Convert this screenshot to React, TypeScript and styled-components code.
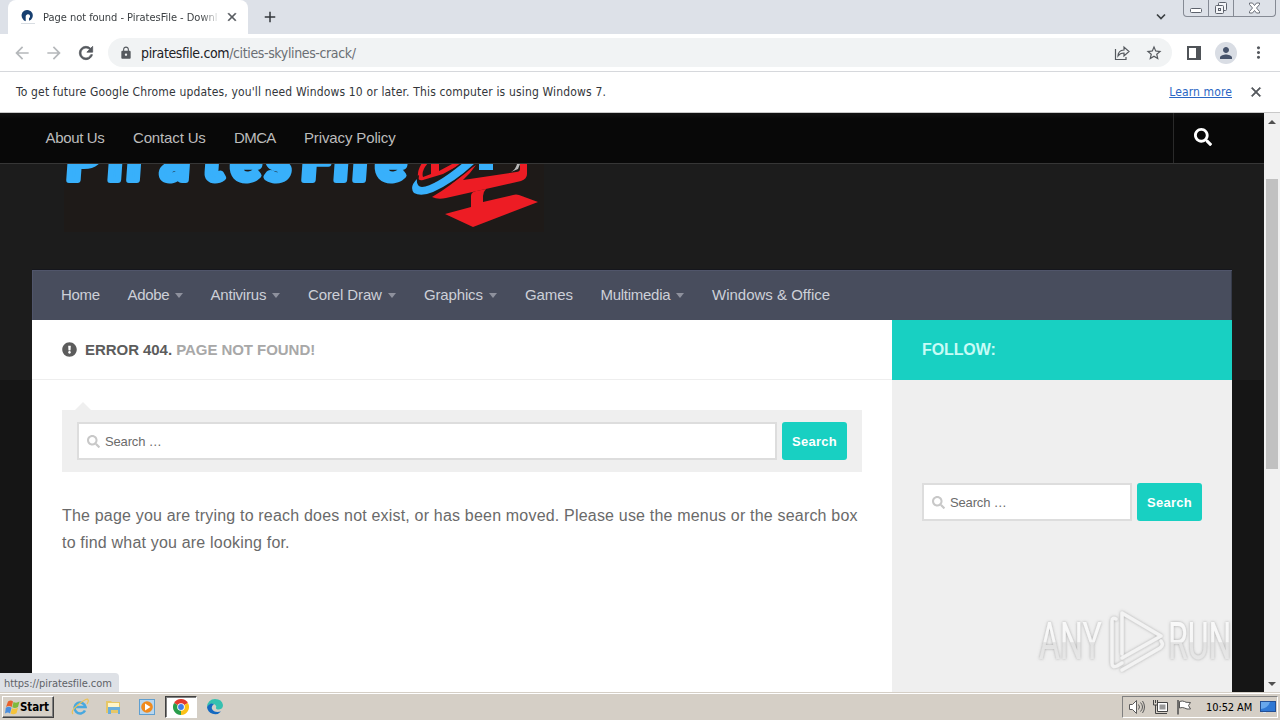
import React from "react";
import styled, { createGlobalStyle } from "styled-components";
import { FaSearch, FaExclamationCircle } from "react-icons/fa";
import { MdLock, MdRefresh, MdArrowBack, MdArrowForward, MdStarBorder, MdPerson, MdMoreVert, MdClose, MdAdd } from "react-icons/md";

const tahoma = `"DejaVu Sans Condensed", "DejaVu Sans", sans-serif`;
const arial = `"Liberation Sans", Arial, sans-serif`;

const GlobalStyle = createGlobalStyle`
  * {
    box-sizing: border-box;
  }
  body {
    margin: 0;
    overflow: hidden;
  }
  svg {
    display: block;
    flex: none;
  }
`;

interface Spaced {
  $spacing?: number;
}

const Screen = styled.div`
  width: 1280px;
  height: 720px;
  display: flex;
  flex-direction: column;
  overflow: hidden;
  position: relative;
  font-family: ${tahoma};
  background: white;
`;

/* ---------- browser chrome ---------- */

const TabStrip = styled.div`
  height: 34px;
  flex: none;
  display: flex;
  align-items: flex-start;
  background: #dde1e8;
  padding-left: 8px;
`;

const Tab = styled.div`
  width: 240px;
  height: 34px;
  display: flex;
  align-items: center;
  padding: 0 9px 0 12px;
  background: white;
  border-radius: 8px 8px 0 0;
`;

const TabTitle = styled.div`
  width: 176px;
  margin-left: 7px;
  overflow: hidden;
  white-space: nowrap;
  font-size: 11px;
  letter-spacing: -0.03px;
  color: #3c4043;
  mask-image: linear-gradient(to right, black 158px, transparent 177px);
`;

const NewTab = styled.div`
  margin: 8px auto 0 13px;
  color: #33373b;
`;

const TabSearch = styled.div`
  margin: 13px 17px 0 0;
`;

const WindowButtons = styled.div`
  display: flex;
  height: 17px;
  margin-right: 4px;
  border: 1px solid #858a94;
  border-top: none;
  border-radius: 0 0 4px 4px;
`;

const WindowButton = styled.div<{ $width: number }>`
  width: ${(p) => p.$width}px;
  display: flex;
  align-items: center;
  justify-content: center;
  & + & {
    border-left: 1px solid #858a94;
  }
`;

const Toolbar = styled.div`
  height: 38px;
  flex: none;
  display: flex;
  align-items: center;
  padding: 0 12px;
  border-bottom: 1px solid #d6d8dc;
  color: #55595e;
`;

const ToolIcon = styled.div<{ $left: number; $dim?: boolean; $bold?: boolean }>`
  margin-left: ${(p) => p.$left}px;
  color: ${(p) => (p.$dim ? "#b5b8bb" : "#55595e")};
  path:not([fill="none"]) {
    stroke: currentColor;
    stroke-width: ${(p) => (p.$bold ? 0.9 : 0)};
  }
`;

const Omnibox = styled.div`
  width: 1064px;
  height: 29px;
  margin-left: 12px;
  display: flex;
  align-items: center;
  padding: 0 9px 0 11px;
  border-radius: 15px;
  background: #f1f3f4;
`;

const Url = styled.div`
  flex: 1;
  margin-left: 8px;
  font-size: 14px;
  letter-spacing: -0.37px;
  color: #6a6e73;
  b {
    font-weight: 400;
    color: #202124;
  }
`;

const Avatar = styled.div`
  width: 22px;
  height: 22px;
  margin-left: 14px;
  display: flex;
  align-items: center;
  justify-content: center;
  border-radius: 50%;
  background: #d9dde4;
  color: #46536b;
`;

const InfoBar = styled.div`
  height: 41px;
  flex: none;
  display: flex;
  align-items: center;
  padding: 0 16px;
  border-bottom: 1px solid #c9c9c9;
  font-size: 12px;
  color: #33363a;
`;

const InfoText = styled.div<Spaced>`
  flex: 1;
  letter-spacing: ${(p) => p.$spacing}px;
`;

const LearnMore = styled.a<Spaced>`
  color: #2a66c4;
  text-decoration: underline;
  letter-spacing: ${(p) => p.$spacing}px;
`;

/* ---------- site ---------- */

const Viewport = styled.div`
  height: 579px;
  flex: none;
  display: flex;
  font-family: ${arial};
`;

const Site = styled.div`
  width: 1264px;
  display: flex;
  flex-direction: column;
  overflow: hidden;
  background: linear-gradient(#1c1c1c 267px, #151515 267px);
`;

const TopBar = styled.div`
  height: 51px;
  flex: none;
  display: flex;
  align-items: center;
  padding-left: 45.5px;
  background: linear-gradient(#121212, #080808 6px);
  border-bottom: 1px solid #363636;
`;

const TopLink = styled.div<{ $width: number } & Spaced>`
  width: ${(p) => p.$width}px;
  padding-bottom: 2px;
  font-size: 15px;
  white-space: nowrap;
  letter-spacing: ${(p) => p.$spacing}px;
  color: #bcbcbc;
`;

const TopSearch = styled.div`
  width: 91px;
  height: 50px;
  margin-left: auto;
  display: flex;
  align-items: center;
  padding: 0 0 2px 20px;
  border-left: 1px solid #2a2a2a;
  color: white;
`;

const Header = styled.div`
  height: 106px;
  flex: none;
  padding-left: 62px;
  overflow: hidden;
`;

const NavBar = styled.div`
  width: 1200px;
  height: 50px;
  flex: none;
  margin-left: 32px;
  display: flex;
  align-items: center;
  padding: 0 0 2px 29px;
  background: #484d5d;
  box-shadow: 0 -1px 0 #15161c, inset 1px 1px 0 #50556a, inset -1px 0 0 #353a49;
`;

const NavItem = styled.div<{ $width: number } & Spaced>`
  width: ${(p) => p.$width}px;
  display: flex;
  align-items: center;
  white-space: nowrap;
  font-size: 15px;
  letter-spacing: ${(p) => p.$spacing}px;
  color: #cdd0d8;
`;

const Caret = styled.span`
  margin: 2px 0 0 6px;
  border: 4.5px solid transparent;
  border-top: 5px solid #8e919d;
  border-bottom: none;
`;

const Columns = styled.div`
  flex: 1;
  width: 1200px;
  margin-left: 32px;
  display: flex;
`;

const Main = styled.div`
  width: 860px;
  background: white;
`;

const PageTitle = styled.div`
  height: 60px;
  display: flex;
  align-items: center;
  padding-left: 30px;
  border-bottom: 1px solid #eeeeee;
  font-size: 15px;
  font-weight: 700;
  color: #5c5c5c;
`;

const TitleText = styled.div<Spaced>`
  margin-left: 8px;
  letter-spacing: ${(p) => p.$spacing}px;
  span {
    color: #a8a8a8;
  }
`;

const SearchPanel = styled.div`
  position: relative;
  margin: 30px 30px 0;
  height: 62px;
  padding: 12px 15px;
  background: #efefef;
  &::before {
    content: "";
    position: absolute;
    top: -8px;
    left: 13px;
    border: 8px solid transparent;
    border-bottom-color: #efefef;
    border-top: none;
  }
`;

const SearchRow = styled.div`
  display: flex;
  gap: 5px;
  height: 38px;
`;

const SearchField = styled.div`
  flex: 1;
  display: flex;
  align-items: center;
  gap: 5px;
  padding-left: 8px;
  border: 2px solid #dddddd;
  background: white;
  font-size: 13px;
  letter-spacing: -0.15px;
  color: #6b6b6b;
`;

const SearchButton = styled.div`
  width: 65px;
  display: flex;
  align-items: center;
  justify-content: center;
  border-radius: 3px;
  background: #18d0c2;
  color: white;
  font-size: 13px;
  font-weight: 700;
  letter-spacing: 0.3px;
`;

const Message = styled.p<Spaced>`
  margin: 30px 0 0 30px;
  font-size: 16px;
  line-height: 27px;
  white-space: nowrap;
  color: #6a6a6a;
  letter-spacing: ${(p) => p.$spacing}px;
`;

const Sidebar = styled.div`
  width: 340px;
  background: #efefef;
`;

const Follow = styled.div`
  height: 60px;
  display: flex;
  align-items: center;
  padding-left: 30px;
  background: #18d0c2;
  color: #c8fbf6;
  font-size: 16px;
  font-weight: 700;
  letter-spacing: -0.1px;
`;

const Widget = styled.div`
  padding: 103px 30px 0;
`;

const Scrollbar = styled.div`
  width: 16px;
  display: flex;
  flex-direction: column;
  align-items: center;
  padding: 7px 0 6px;
  background: #f1f1f1;
`;

const ScrollArrow = styled.div<{ $down?: boolean }>`
  border: 4px solid transparent;
  ${(p) => (p.$down ? "border-top-color: #505050; border-bottom: none; margin-top: auto;" : "border-bottom-color: #505050; border-top: none;")}
`;

const ScrollThumb = styled.div`
  width: 12px;
  height: 290px;
  margin-top: 55px;
  background: #c1c1c1;
`;

/* ---------- overlays ---------- */

const StatusBubble = styled.div`
  position: absolute;
  left: 0;
  top: 673px;
  width: 119px;
  height: 19px;
  padding: 4px 0 0 4px;
  border-radius: 0 4px 0 0;
  background: #dee1e6;
  font-size: 11px;
  letter-spacing: -0.06px;
  color: #5f6368;
`;

const Watermark = styled.svg`
  position: absolute;
  left: 1030px;
  top: 602px;
`;

/* ---------- taskbar ---------- */

const Taskbar = styled.div`
  height: 28px;
  flex: none;
  display: flex;
  align-items: center;
  padding: 1px 2px 0;
  background: #d5cfc6;
  border-top: 1px solid #d5cfc6;
  box-shadow: inset 0 1px 0 white;
`;

const StartButton = styled.div`
  width: 52px;
  height: 22px;
  display: flex;
  align-items: center;
  padding-left: 2px;
  border: 1px solid;
  border-color: white #404040 #404040 white;
  box-shadow: inset -1px -1px 0 #808080;
  font-size: 11.5px;
  font-weight: 700;
  letter-spacing: -0.1px;
  color: black;
`;

const QuickLaunch = styled.div`
  display: flex;
  align-items: center;
  margin-left: 9px;
`;

const QuickItem = styled.div<{ $active?: boolean }>`
  width: ${(p) => (p.$active ? 32 : 33.7)}px;
  height: 22px;
  display: flex;
  align-items: center;
  justify-content: center;
  ${(p) => p.$active && "background: white; border: 1px solid; border-color: #404040 white white #404040; box-shadow: inset 1px 1px 0 #808080; margin: 0 1px;"}
`;

const Tray = styled.div`
  width: 156px;
  height: 22px;
  margin-left: auto;
  display: flex;
  align-items: center;
  padding-left: 5px;
  border: 1px solid;
  border-color: #808080 white white #808080;
`;

const TrayIcon = styled.div`
  width: 24px;
`;

const Clock = styled.div`
  width: 54px;
  margin-left: 6px;
  font-size: 11px;
  letter-spacing: -0.1px;
  white-space: nowrap;
  color: black;
`;

const topLinks = [
  { label: "About Us", width: 87.5, spacing: -0.35 },
  { label: "Contact Us", width: 101, spacing: -0.15 },
  { label: "DMCA", width: 70, spacing: -0.6 },
  { label: "Privacy Policy", width: 110, spacing: -0.13 },
];

const navItems = [
  { label: "Home", width: 66.5, spacing: -0.3 },
  { label: "Adobe", width: 83, spacing: -0.35, menu: true },
  { label: "Antivirus", width: 97.5, spacing: -0.2, menu: true },
  { label: "Corel Draw", width: 116, spacing: -0.12, menu: true },
  { label: "Graphics", width: 101, spacing: -0.15, menu: true },
  { label: "Games", width: 75.5, spacing: -0.1 },
  { label: "Multimedia", width: 111.5, spacing: -0.27, menu: true },
  { label: "Windows & Office", width: 130, spacing: 0 },
];

const Logo: React.FC = () => (
  <svg width="482" height="68" viewBox="62 164 482 68">
    <rect x="64" y="164" width="480" height="68" fill="#1e1a18" />
    <text
      transform="translate(0 180) skewX(-4)"
      x="65 107 126 160 202 230 265 300 333 352 375"
      y="0"
      fill="#38b0fb"
      stroke="#38b0fb"
      strokeWidth="6"
      strokeLinejoin="round"
      fontFamily="Lato, sans-serif"
      fontWeight="900"
      fontSize="56"
    >
      PiratesFile
    </text>
    <g fill="#ed1c24">
      <path d="M422 163q-5 8-4 14 0 4 5 3l20-6 20-11h-9l-15 8v-8h-8v11l-8 3q-2-6 5-14z" />
      <path d="M476 165l-8 5q-17 16-36 27 6 3 14 1l75-17q6-2 6-7v-11h-7v6q0 3-4 3l-53 8q7-6 13-15z" />
      <path d="M471 207v-11q0-4 5-5l10-2q-3 3-3 7v6l30-7q3-1 6 0l19 7-65 25-28-13z" />
    </g>
    <path d="M520 164l-2 5-7 3q5-3 6-8z" fill="#b9b9b9" />
    <path d="M479 164h14v6h-14z" fill="#38b0fb" />
    <path
      d="M475 163q-20 19-42 29-12 5-19 1-5-6 3-14-1 7 5 8 13-1 41-24z"
      fill="#38b0fb"
      stroke="#1e1a18"
      strokeWidth="3"
      paintOrder="stroke"
    />
  </svg>
);

const Search: React.FC = () => (
  <SearchRow>
    <SearchField>
      <FaSearch size={13} color="#c8c8c8" />
      Search …
    </SearchField>
    <SearchButton>Search</SearchButton>
  </SearchRow>
);

const WindowsFlag: React.FC = () => (
  <svg width="15" height="15" viewBox="0 0 15 15">
    <path d="M3 1.500q3-2 5 0L6.700 7Q4 5 1 7z" fill="#e8602c" />
    <path d="M8.500 2q3 1.500 6-.5L13 7q-3 2-5.700.3z" fill="#7fb93c" />
    <path d="M.8 7.800q3-2 5.700 0L5 13.500q-2-2-5 0z" fill="#4a8ede" />
    <path d="M7 8.200q3 1.500 6-.5l-1.500 5.500q-3 2-6 .3z" fill="#f5c33b" />
  </svg>
);

const App: React.FC = () => {
  return (
    <Screen>
      <GlobalStyle />
      <TabStrip>
        <Tab>
          <svg width="16" height="16" viewBox="0 0 16 16">
            <path d="M2.800 10A5.600 5.600 0 1 1 9 11.800V9.300A2.200 2.200 0 1 0 5.700 7v5.200q-2-.5-2.900-2.200z" fill="#173f70" />
            <path d="M1 14.500h14" stroke="#d8dde2" />
          </svg>
          <TabTitle>Page not found - PiratesFile - Download</TabTitle>
          <ToolIcon $left={7} $bold>
            <MdClose size={14} />
          </ToolIcon>
        </Tab>
        <NewTab>
          <MdAdd size={18} />
        </NewTab>
        <TabSearch>
          <svg width="10" height="8" viewBox="0 0 10 8">
            <path d="M1 1.500l4 4 4-4" fill="none" stroke="#3c4043" strokeWidth="1.700" />
          </svg>
        </TabSearch>
        <WindowButtons>
          <WindowButton $width={24}>
            <svg width="12" height="16" viewBox="0 0 12 16">
              <rect x=".5" y="8.500" width="11" height="4" rx="1" fill="#fff" stroke="#5d626c" />
            </svg>
          </WindowButton>
          <WindowButton $width={25}>
            <svg width="14" height="16" viewBox="0 0 14 16" fill="#f4f5f8" stroke="#5d626c">
              <rect x="4.500" y="2.500" width="8" height="8" rx="1" />
              <rect x="1.500" y="5.500" width="8" height="8" rx="1" />
              <rect x="4.500" y="8.500" width="2" height="2" />
            </svg>
          </WindowButton>
          <WindowButton $width={42}>
            <svg width="13" height="12" viewBox="0 0 13 12">
              <path d="M1.500 1h3l2 2.500L8.500 1h3v1.500L8.500 6l3 3.500V11h-3l-2-2.500-2 2.500h-3V9.500l3-3.500-3-3.500z" fill="#fff" stroke="#5d626c" strokeWidth=".9" />
            </svg>
          </WindowButton>
        </WindowButtons>
      </TabStrip>

      <Toolbar>
        <ToolIcon $left={0} $dim>
          <MdArrowBack size={20} />
        </ToolIcon>
        <ToolIcon $left={12} $dim>
          <MdArrowForward size={20} />
        </ToolIcon>
        <ToolIcon $left={12} $bold>
          <MdRefresh size={20} />
        </ToolIcon>
        <Omnibox>
          <MdLock size={14} />
          <Url>
            <b>piratesfile.com</b>/cities-skylines-crack/
          </Url>
          <svg width="16" height="16" viewBox="0 0 16 16" fill="none" stroke="#55595e" strokeWidth="1.200">
            <path d="M1.500 4v10.500H12V12" />
            <path d="M4 11q0-5.500 6-6V2l5 4.500-5 4.500V8q-4 0-6 3z" />
          </svg>
          <ToolIcon $left={15}>
            <MdStarBorder size={18} />
          </ToolIcon>
        </Omnibox>
        <ToolIcon $left={15}>
          <svg width="14" height="14" viewBox="0 0 14 14">
            <path d="M0 0h14v14H0zM2 2v10h7V2z" fillRule="evenodd" fill="#4f5358" />
          </svg>
        </ToolIcon>
        <Avatar>
          <MdPerson size={18} />
        </Avatar>
        <ToolIcon $left={12}>
          <MdMoreVert size={19} />
        </ToolIcon>
      </Toolbar>

      <InfoBar>
        <InfoText $spacing={0.16}>
          To get future Google Chrome updates, you'll need Windows 10 or later. This computer is using Windows 7.
        </InfoText>
        <LearnMore $spacing={0.13}>Learn more</LearnMore>
        <ToolIcon $left={16} $bold>
          <MdClose size={16} />
        </ToolIcon>
      </InfoBar>

      <Viewport>
        <Site>
          <TopBar>
            {topLinks.map((link) => (
              <TopLink key={link.label} $width={link.width} $spacing={link.spacing}>
                {link.label}
              </TopLink>
            ))}
            <TopSearch>
              <FaSearch size={18} />
            </TopSearch>
          </TopBar>
          <Header>
            <Logo />
          </Header>
          <NavBar>
            {navItems.map((item) => (
              <NavItem key={item.label} $width={item.width} $spacing={item.spacing}>
                {item.label}
                {item.menu && <Caret />}
              </NavItem>
            ))}
          </NavBar>
          <Columns>
            <Main>
              <PageTitle>
                <FaExclamationCircle size={15} />
                <TitleText $spacing={-0.05}>
                  ERROR 404. <span>PAGE NOT FOUND!</span>
                </TitleText>
              </PageTitle>
              <SearchPanel>
                <Search />
              </SearchPanel>
              <Message $spacing={0.19}>
                The page you are trying to reach does not exist, or has been moved. Please use the menus or the search box
                <br />
                to find what you are looking for.
              </Message>
            </Main>
            <Sidebar>
              <Follow>FOLLOW:</Follow>
              <Widget>
                <Search />
              </Widget>
            </Sidebar>
          </Columns>
        </Site>
        <Scrollbar>
          <ScrollArrow />
          <ScrollThumb />
          <ScrollArrow $down />
        </Scrollbar>
      </Viewport>

      <Taskbar>
        <StartButton>
          <WindowsFlag />
          Start
        </StartButton>
        <QuickLaunch>
          <QuickItem>
            <svg width="18" height="18" viewBox="0 0 18 18" fill="none">
              <path d="M14 12.500A5.500 5.500 0 1 1 14.500 9H5" stroke="#48a8df" strokeWidth="2.600" />
              <path d="M2 16Q-1 13 8 6t9-4q1 1-1 4" stroke="#ecc255" strokeWidth="1.200" />
            </svg>
          </QuickItem>
          <QuickItem>
            <svg width="17" height="16" viewBox="0 0 17 16">
              <path d="M1 2h5l1 1h8v11H1z" fill="#e6c768" />
              <path d="M3 4h11v4H3z" fill="#fff5c8" />
              <path d="M3 8h12v7h-2v-4H6v4H3z" fill="#6aaedb" />
            </svg>
          </QuickItem>
          <QuickItem>
            <svg width="16" height="16" viewBox="0 0 16 16">
              <rect x=".5" y=".5" width="15" height="15" fill="#b8d6ee" stroke="#5f9fd0" />
              <circle cx="8" cy="8" r="5.800" fill="#f08a1d" />
              <path d="M6 4.500v7L11.500 8z" fill="white" />
            </svg>
          </QuickItem>
          <QuickItem $active>
            <svg width="16" height="16" viewBox="0 0 16 16">
              <path d="M8 8L1.070 4A8 8 0 0 1 14.930 4z" fill="#e33b2e" />
              <path d="M8 8l6.930-4A8 8 0 0 1 8 16z" fill="#fbc116" />
              <path d="M8 8v8A8 8 0 0 1 1.070 4z" fill="#2a9d4b" />
              <circle cx="8" cy="8" r="3.800" fill="white" />
              <circle cx="8" cy="8" r="2.900" fill="#3f7de8" />
            </svg>
          </QuickItem>
          <QuickItem>
            <svg width="16" height="16" viewBox="0 0 16 16">
              <path d="M0 8a8 8 0 0 1 8-8q7 0 8 6 0 4-4 4.500-3 0-3-1.500 1-2-1-3.500Q4 3 0 8z" fill="#36c0b0" />
              <path d="M0 8q3-5 7-3-3 2-2 5 2 4 9 2.500A8 8 0 0 1 0 8z" fill="#1469c0" />
            </svg>
          </QuickItem>
        </QuickLaunch>
        <Tray>
          <TrayIcon>
            <svg width="18" height="16" viewBox="0 0 18 16" fill="none" stroke="#5a5a5a">
              <path d="M1.500 5.500h3l4-4v13l-4-4h-3z" fill="#fff" />
              <path d="M10.500 5.500q2 2.500 0 5M12.500 3.500q4 4.500 0 9M14.500 2q4 6 0 12" />
            </svg>
          </TrayIcon>
          <TrayIcon>
            <svg width="17" height="16" viewBox="0 0 17 16">
              <path d="M5.500 3.500h10v9h-10zM7 14.500h8" fill="#fff" stroke="#444" />
              <rect x="7.500" y="5.500" width="6" height="5" fill="#999" />
              <path d="M1.500 1v5h4V1M3.500 6v8.500H7M3.500 1v3" fill="none" stroke="#444" />
            </svg>
          </TrayIcon>
          <TrayIcon>
            <svg width="17" height="16" viewBox="0 0 17 16">
              <path d="M3.500 2.500q3-1 5 0 0 1 6 1l-2 3 2 3.500q-4 .500-6-1-2-1-5 0z" fill="#fff" stroke="#555" />
              <path d="M2 1v14.500" stroke="#555" strokeWidth="1.600" />
            </svg>
          </TrayIcon>
          <Clock>10:52 AM</Clock>
          <svg width="16" height="14" viewBox="0 0 16 14">
            <rect x=".5" y="1.500" width="15" height="10" fill="#2f78d4" stroke="#234f94" />
            <path d="M1 2h9Q8 8 1 9z" fill="#67a7ec" />
            <path d="M3 12.500h3" stroke="#d7e7f7" />
          </svg>
        </Tray>
      </Taskbar>

      <StatusBubble>https://piratesfile.com</StatusBubble>

      <Watermark width="202" height="76" viewBox="0 0 202 76">
        <defs>
          <linearGradient id="metal" x1="0" y1="0" x2="0" y2="1">
            <stop offset="0" stopColor="#fafafa" />
            <stop offset=".5" stopColor="#f6f6f6" />
            <stop offset=".52" stopColor="#e2e2e2" />
            <stop offset="1" stopColor="#ebebeb" />
          </linearGradient>
          <filter id="glow" x="-10%" y="-10%" width="120%" height="120%">
            <feDropShadow dx="0" dy="0" stdDeviation="1.500" floodColor="#777" floodOpacity=".6" />
          </filter>
        </defs>
        <g filter="url(#glow)" fill="url(#metal)">
          <g fontFamily="Roboto, sans-serif" fontSize="51">
            <text transform="translate(9 57) scale(.69 1)" textLength="91" lengthAdjust="spacingAndGlyphs">
              ANY
            </text>
            <text transform="translate(138 57) scale(.69 1)" textLength="92" lengthAdjust="spacingAndGlyphs">
              RUN
            </text>
          </g>
          <g fill="none" stroke="#f3f3f3" strokeWidth="3.500" strokeLinejoin="round" strokeLinecap="round">
            <path d="M92 52V11l39 23-39 22" />
            <path d="M86 17q-4-2-4 2v42q0 5 5 3l5-3M92 68l38-22q4-3 1-7" />
          </g>
        </g>
      </Watermark>
    </Screen>
  );
};

export default App;
